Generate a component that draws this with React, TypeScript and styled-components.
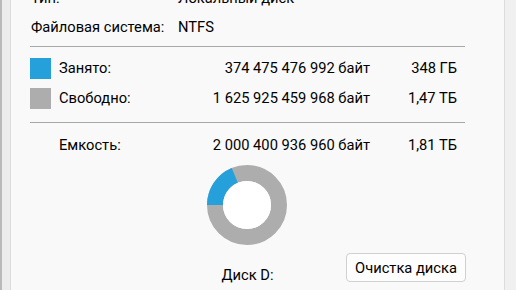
import React from "react";
import styled, { createGlobalStyle } from "styled-components";

const Global = createGlobalStyle`
  html, body { margin: 0; padding: 0; background: #f0f0f0; }
  body { font-family: Roboto, "Liberation Sans", sans-serif; color: #000; }
`;

const Window = styled.div`
  display: flex;
  width: 516px;
  height: 290px;
  overflow: hidden;
  background: #f0f0f0;
`;

const Frame = styled.div`
  width: 10px;
  flex: none;
  border-left: 2px solid #b9b9b9;
  background: #ececec;
  box-sizing: border-box;
`;

const Panel = styled.div`
  width: 495px;
  flex: none;
  background: #f9f9f9;
  border-left: 1px solid #dcdcdc;
  border-right: 1px solid #dcdcdc;
  box-sizing: border-box;
  padding: 0 39px 0 19px;
  font-size: 14.7px;
`;

const Content = styled.div`
  display: flex;
  flex-direction: column;
  margin-top: -12px;
`;

const InfoRow = styled.div`
  display: grid;
  grid-template-columns: 147px 1fr;
  line-height: 20px;
  margin-bottom: 9px;
  padding-left: 1px;
`;

const Rule = styled.div<{ $top: number; $bottom: number }>`
  height: 1px;
  background: #a8a8a8;
  margin-top: ${(p) => p.$top}px;
  margin-bottom: ${(p) => p.$bottom}px;
`;

const UsageRow = styled.div<{ $gap?: number }>`
  display: grid;
  grid-template-columns: 21px 159px 160px 87px;
  align-items: center;
  height: 21px;
  line-height: 21px;
  margin-bottom: ${(p) => p.$gap ?? 0}px;
`;

const Swatch = styled.div<{ $color?: string }>`
  width: 21px;
  height: 21px;
  background: ${(p) => p.$color ?? "transparent"};
`;

const Label = styled.div`
  padding-left: 8px;
  white-space: nowrap;
`;

const Num = styled.div`
  text-align: right;
  white-space: nowrap;
`;

const Chart = styled.div`
  display: flex;
  justify-content: center;
  margin-top: 9px;
  padding-right: 1px;
`;

const Bottom = styled.div`
  display: grid;
  grid-template-columns: 1fr auto 1fr;
  align-items: start;
  margin-top: 8px;
  margin-right: -1px;
`;

const DiskName = styled.div`
  grid-column: 2;
  margin-top: 12px;
  line-height: 20px;
  padding-right: 1px;
`;

const Button = styled.button`
  grid-column: 3;
  justify-self: end;
  width: 120px;
  height: 29px;
  font-family: inherit;
  font-size: 14.7px;
  color: #000;
  background: #fdfdfd;
  border: 1px solid #d0d0d0;
  border-radius: 4px;
  padding: 0;
`;

const used = 374475476992;
const total = 2000400936960;

function Donut() {
  const r = 32;
  const c = 2 * Math.PI * r;
  const usedLen = (used / total) * c;
  return (
    <svg width="80" height="80" viewBox="0 0 80 80">
      <circle cx="40" cy="40" r={r} fill="none" stroke="#adadad" strokeWidth="16" />
      <circle
        cx="40"
        cy="40"
        r={r}
        fill="none"
        stroke="#26a0da"
        strokeWidth="16"
        strokeDasharray={`${usedLen} ${c}`}
        transform="rotate(180 40 40)"
      />
      <circle cx="40" cy="40" r="24" fill="#ffffff" />
    </svg>
  );
}

export default function App() {
  return (
    <>
      <Global />
      <Window>
        <Frame />
        <Panel>
          <Content>
            <InfoRow>
              <span>Тип:</span>
              <span>Локальный диск</span>
            </InfoRow>
            <InfoRow>
              <span>Файловая система:</span>
              <span>NTFS</span>
            </InfoRow>
            <Rule $top={0} $bottom={11} />
            <UsageRow $gap={9}>
              <Swatch $color="#26a0da" />
              <Label>Занято:</Label>
              <Num>374 475 476 992 байт</Num>
              <Num>348 ГБ</Num>
            </UsageRow>
            <UsageRow>
              <Swatch $color="#adadad" />
              <Label>Свободно:</Label>
              <Num>1 625 925 459 968 байт</Num>
              <Num>1,47 ТБ</Num>
            </UsageRow>
            <Rule $top={13} $bottom={12} />
            <UsageRow>
              <Swatch />
              <Label>Емкость:</Label>
              <Num>2 000 400 936 960 байт</Num>
              <Num>1,81 ТБ</Num>
            </UsageRow>
            <Chart>
              <Donut />
            </Chart>
            <Bottom>
              <DiskName>Диск D:</DiskName>
              <Button>Очистка диска</Button>
            </Bottom>
          </Content>
        </Panel>
      </Window>
    </>
  );
}
